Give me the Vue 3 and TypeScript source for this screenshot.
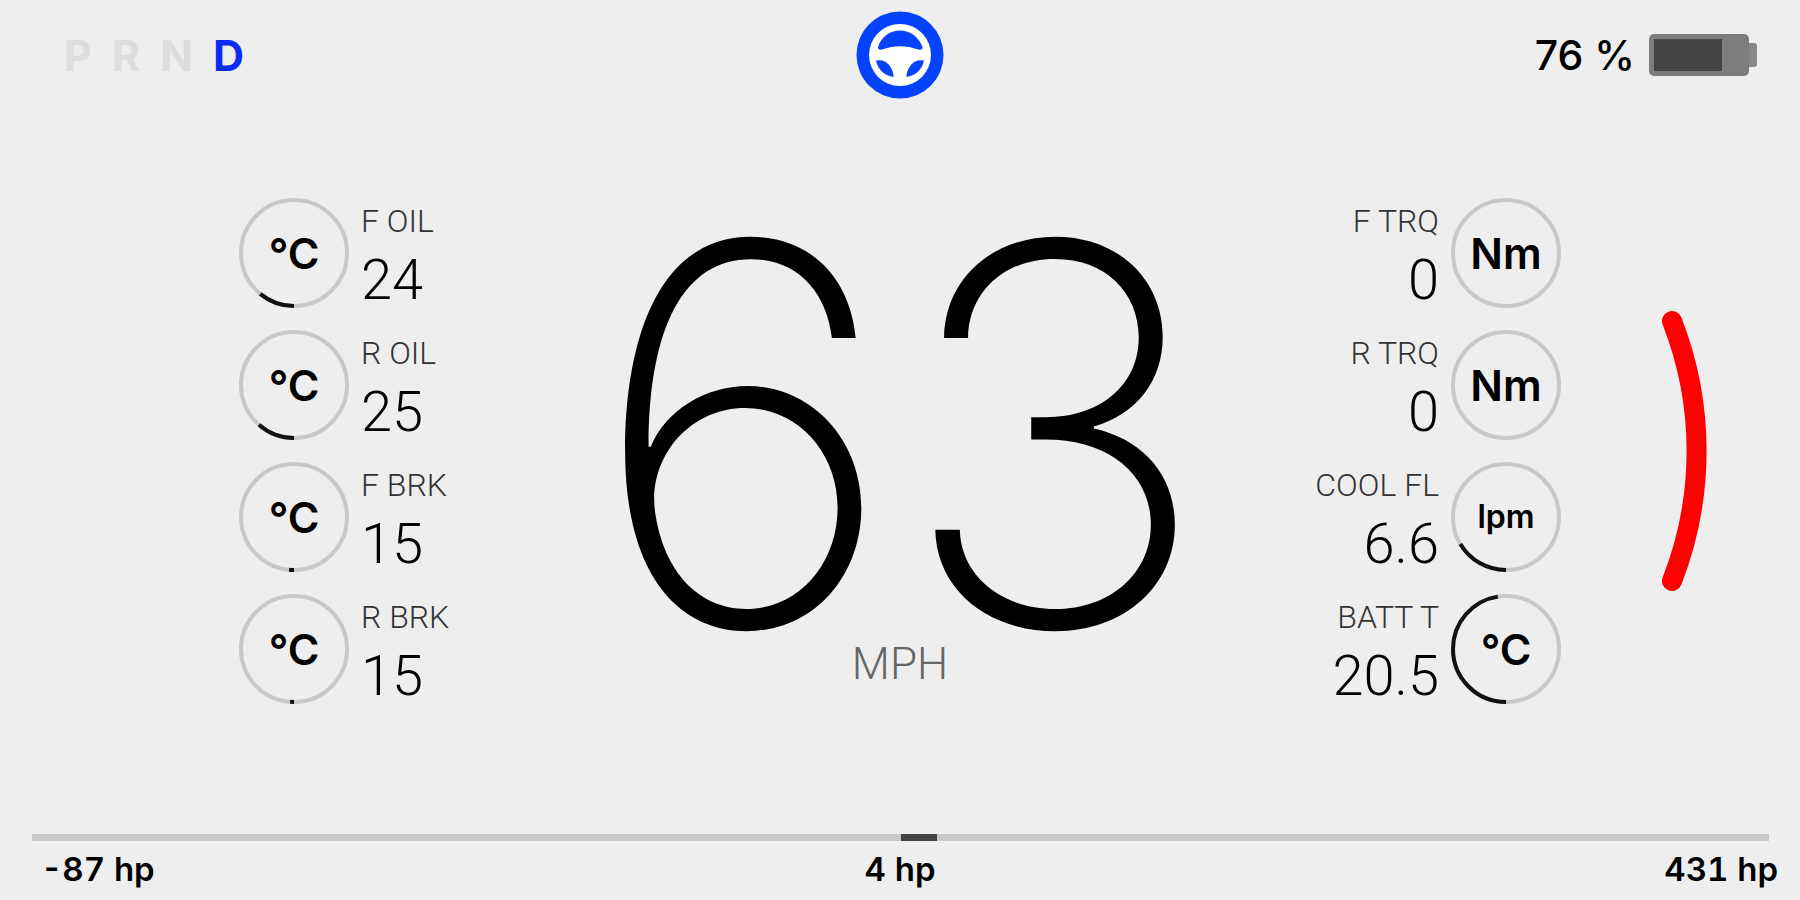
<script setup lang="ts">
interface Gauge {
  label: string
  value: string
  unit: string
  fill: number
}

const gears: string[] = ['P', 'R', 'N', 'D']
const activeGear = 'D'
const charge = 76

const leftGauges: Gauge[] = [
  { label: 'F OIL', value: '24', unit: '°C', fill: 0.11 },
  { label: 'R OIL', value: '25', unit: '°C', fill: 0.115 },
  { label: 'F BRK', value: '15', unit: '°C', fill: 0.015 },
  { label: 'R BRK', value: '15', unit: '°C', fill: 0.012 },
]
const rightGauges: Gauge[] = [
  { label: 'F TRQ', value: '0', unit: 'Nm', fill: 0 },
  { label: 'R TRQ', value: '0', unit: 'Nm', fill: 0 },
  { label: 'COOL FL', value: '6.6', unit: 'lpm', fill: 0.165 },
  { label: 'BATT T', value: '20.5', unit: '°C', fill: 0.475 },
]
const sides = [
  { name: 'left', gauges: leftGauges },
  { name: 'right', gauges: rightGauges },
]
</script>

<template>
  <div class="dash">
    <header class="top">
      <ul class="gears" aria-label="Gear">
        <li v-for="g in gears" :key="g" :class="{ active: g === activeGear }">{{ g }}</li>
      </ul>
      <svg class="wheel" viewBox="0 0 88 88" role="img" aria-label="Autopilot active">
        <circle cx="44" cy="44" r="43.500" fill="#0443fb" />
        <circle cx="44" cy="44" r="31" fill="#fff" />
        <path d="M22 36 C25 26 34 19.500 44 19.500 S63 26 66.500 36 C66.500 38.500 65 39 62.500 38.500 C50 34 38 34 26 38.500 C23.500 39 21.500 38.500 22 36 Z" fill="#0443fb" />
        <path d="M20 49.500 C26 48.500 30 50 33 54 C36 57.500 37.500 61 37.500 66 C28 64.500 22 58.500 20 49.500 Z" fill="#0443fb" />
        <path d="M68 49.500 C62 48.500 58 50 55 54 C52 57.500 50.500 61 50.500 66 C60 64.500 66 58.500 68 49.500 Z" fill="#0443fb" />
      </svg>
      <div class="charge">
        <span>{{ charge }} %</span>
        <div class="battery" aria-hidden="true">
          <div class="shell"><div class="level" :style="{ width: charge + '%' }"></div></div>
          <div class="tip"></div>
        </div>
      </div>
    </header>

    <main class="cluster">
      <section v-for="side in sides" :key="side.name" class="side" :class="side.name">
        <div class="gauges">
          <div v-for="g in side.gauges" :key="g.label" class="gauge">
            <div class="dial">
              <svg viewBox="0 0 110 110" aria-hidden="true">
                <circle cx="55" cy="55" r="53" class="ring" />
                <circle
                  v-if="g.fill > 0"
                  cx="55"
                  cy="55"
                  r="53"
                  class="arc"
                  pathLength="100"
                  :stroke-dasharray="`${g.fill * 100} 100`"
                  transform="rotate(90 55 55)"
                />
              </svg>
              <span class="unit" :class="{ small: g.unit.length > 2 }">{{ g.unit }}</span>
            </div>
            <div class="reading">
              <div class="label">{{ g.label }}</div>
              <div class="value">{{ g.value }}</div>
            </div>
          </div>
        </div>
        <svg v-if="side.name === 'right'" class="limit" viewBox="0 0 50 284" aria-hidden="true">
          <path d="M12 12 A356 356 0 0 1 12 272" />
        </svg>
      </section>
      <section class="speed">
        <div class="digits">63</div>
        <div class="mph">MPH</div>
      </section>
    </main>

    <footer class="power">
      <div class="track"><div class="now"></div></div>
      <div class="scale">
        <span>-87 hp</span>
        <span>4 hp</span>
        <span>431 hp</span>
      </div>
    </footer>
  </div>
</template>

<style>
body {
  margin: 0;
  background: #eeeeee;
}
</style>

<style scoped>
.dash {
  box-sizing: border-box;
  display: flex;
  flex-direction: column;
  min-height: 100vh;
  padding-bottom: 14px;
  background: #eeeeee;
  color: #000;
  font-family: Inter, "Liberation Sans", sans-serif;
}

.top {
  display: grid;
  grid-template-columns: 1fr auto 1fr;
  align-items: center;
  padding: 11px 43px 0;
}
.gears {
  display: flex;
  gap: 20px;
  margin: 0;
  padding: 0 0 0 21px;
  list-style: none;
  font-size: 43px;
  line-height: 44px;
  font-weight: 700;
  color: #dddddd;
}
.gears .active {
  color: #0a2cf5;
}
.wheel {
  width: 88px;
  height: 88px;
}
.charge {
  display: flex;
  justify-content: flex-end;
  align-items: center;
  gap: 14px;
  font-size: 41px;
  line-height: 44px;
  font-weight: 500;
}
.battery {
  display: flex;
  align-items: center;
}
.shell {
  box-sizing: border-box;
  width: 100px;
  height: 42px;
  padding: 5px;
  border-radius: 5px;
  background: #7d7d7d;
}
.level {
  height: 100%;
  background: #444444;
}
.tip {
  width: 8px;
  height: 24px;
  border-radius: 0 3px 3px 0;
  background: #888888;
}

.cluster {
  display: grid;
  grid-template-columns: 1fr auto 1fr;
  margin-top: 99px;
}
.side {
  display: flex;
  align-items: center;
  grid-row: 1;
}
.left {
  grid-column: 1;
  justify-content: flex-start;
  padding-left: 239px;
}
.right {
  grid-column: 3;
  justify-content: flex-end;
  gap: 99px;
  padding-right: 90px;
}
.gauges {
  display: grid;
  gap: 22px;
}
.gauge {
  display: flex;
  gap: 12px;
}
.right .gauge {
  flex-direction: row-reverse;
  text-align: right;
}
.dial {
  display: grid;
  width: 110px;
  height: 110px;
}
.dial > * {
  grid-area: 1 / 1;
  place-self: center;
}
.dial svg {
  width: 110px;
  height: 110px;
  fill: none;
  stroke-width: 4;
}
.ring {
  stroke: #c8c8c8;
}
.arc {
  stroke: #111;
}
.unit {
  font-size: 43px;
  line-height: 44px;
  font-weight: 600;
}
.unit.small {
  font-size: 32px;
}
.reading {
  padding-top: 7px;
  font-family: Roboto, "Liberation Sans", sans-serif;
  font-weight: 300;
  white-space: nowrap;
}
.label {
  font-size: 32px;
  line-height: 32px;
  color: #333;
}
.value {
  margin-top: 15px;
  font-size: 56px;
  line-height: 56px;
}
.limit {
  width: 50px;
  height: 284px;
  fill: none;
  stroke: #ff0000;
  stroke-width: 20;
  stroke-linecap: round;
}

.speed {
  grid-column: 2;
  grid-row: 1;
  display: flex;
  flex-direction: column;
  align-items: center;
  padding-top: 36px;
}
.digits {
  font-size: 528px;
  line-height: 400px;
  font-weight: 200;
}
.mph {
  margin-top: 8px;
  font-family: Roboto, "Liberation Sans", sans-serif;
  font-size: 44px;
  line-height: 44px;
  font-weight: 300;
  color: #666;
}

.power {
  margin-top: auto;
}
.track {
  display: flex;
  height: 7px;
  margin: 0 31px 0 32px;
  background: #c9c9c9;
}
.now {
  width: 36px;
  margin-left: 50%;
  background: #444;
}
.scale {
  display: grid;
  grid-template-columns: 1fr auto 1fr;
  margin-top: 11px;
  padding: 0 22px;
  font-size: 33px;
  line-height: 34px;
  font-weight: 600;
  font-variant-numeric: tabular-nums;
}
.scale span:first-child {
  padding-left: 19px;
}
.scale span:last-child {
  text-align: right;
}
</style>
